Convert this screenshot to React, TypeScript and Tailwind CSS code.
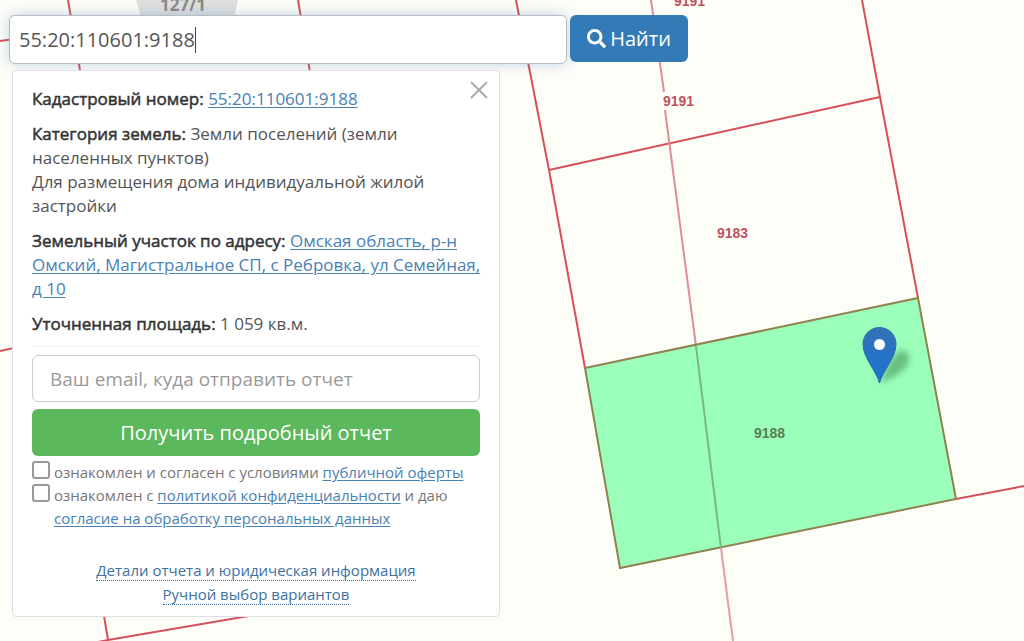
import { useState } from 'react'
import type { ReactNode } from 'react'
import { FaSearch } from 'react-icons/fa'

const CADASTRAL_NUMBER = '55:20:110601:9188'

const BORDERS = [
  'M68 0 L81 76 L104 616 L108 640',
  'M298 0 L310 72',
  'M0 41 L14 39',
  'M0 351 L14 348',
  'M516 0 L549 170 L585 368',
  'M549 170 L880 97',
  'M862 0 L880 97 L918 298',
  'M956 499 L1024 486',
  'M93 643 L108 640 L260 614',
]

function Label({ children }: { children: ReactNode }) {
  return <span className="text-[#333] [-webkit-text-stroke:0.5px_#333]">{children}</span>
}

function Link({ children }: { children: ReactNode }) {
  return (
    <a href="#" className="text-[#4a81b3] underline underline-offset-2">
      {children}
    </a>
  )
}

function ParcelMap() {
  return (
    <svg
      className="absolute inset-0 h-full w-full"
      viewBox="0 0 1024 641"
      preserveAspectRatio="xMinYMin slice"
      fontFamily="'Liberation Sans', sans-serif"
      fontWeight="bold"
    >
      <defs>
        <linearGradient id="pin" x1="0" y1="0" x2="0" y2="1">
          <stop offset="0" stopColor="#3273b5" />
          <stop offset="1" stopColor="#1b75d2" />
        </linearGradient>
        <filter id="soft" x="-50%" y="-50%" width="200%" height="200%">
          <feGaussianBlur stdDeviation="3" />
        </filter>
      </defs>

      <path d="M136 0 L238 0 L234 18 L141 18 Z" fill="#dfdfdd" />
      <text x="160" y="11" fontSize="17" fill="#8a8a8a" fontFamily="'Open Sans', sans-serif">127/1</text>

      <g fill="none" stroke="#d5505a" strokeWidth="2">
        {BORDERS.map(d => (
          <path key={d} d={d} />
        ))}
      </g>
      <path d="M651 0 L664 92 M665 110 L696 346" stroke="#e08d98" strokeWidth="2" fill="none" />
      <path d="M721 548 L733 641" stroke="#eb9aa6" strokeWidth="2" />

      <path d="M585 368 L918 298 L956 499 L620 568 Z" fill="#9bffbb" stroke="#8f8250" strokeWidth="2" />
      <path d="M696 346 L721 548" stroke="#7cb587" strokeWidth="2" />

      <g fontSize="14" fill="#c0525f">
        <text x="674" y="6">9191</text>
        <text x="663" y="106">9191</text>
        <text x="717" y="238">9183</text>
      </g>
      <text x="754" y="438" fontSize="14" fill="#558050">9188</text>

      <path
        d="M880 383 C886 368 892 356 900 350 C912 350 912 364 902 371 C896 376 888 380 880 383 Z"
        fill="#4d9b64"
        opacity="0.65"
        filter="url(#soft)"
      />
      <path
        d="M879.500 383 C876 370 863 358 863 344 A16.500 16.500 0 0 1 896 344 C896 358 883 370 879.500 383 Z"
        fill="url(#pin)"
        stroke="#2e6cab"
      />
      <circle cx="879.500" cy="344.500" r="5.500" fill="#fff" />
    </svg>
  )
}

function SearchBar() {
  const [query, setQuery] = useState(CADASTRAL_NUMBER)

  return (
    <form className="flex w-[679px] max-w-full items-start gap-[3px]" onSubmit={e => e.preventDefault()}>
      <div className="relative min-w-0 flex-1">
        <input
          type="text"
          aria-label="Кадастровый номер"
          value={query}
          onChange={e => setQuery(e.target.value)}
          className="block h-[49px] w-full rounded-md border border-[#b5bcc2] bg-white px-[9px] text-[20px] text-[#555] shadow-[0_0_14px_rgba(70,130,190,0.35)] outline-none"
        />
        <span className="absolute top-3 left-[186px] h-[26px] w-px bg-[#444]" />
      </div>
      <button
        type="submit"
        className="flex h-[47px] w-[118px] items-center justify-center gap-1 rounded-md bg-[#337ab7] text-[20px] text-white"
      >
        <FaSearch size={19} />
        Найти
      </button>
    </form>
  )
}

function ReportForm() {
  const [email, setEmail] = useState('')

  return (
    <form className="mt-[10px] border-t border-[#eee] pt-2" onSubmit={e => e.preventDefault()}>
      <input
        type="email"
        aria-label="Email"
        placeholder="Ваш email, куда отправить отчет"
        value={email}
        onChange={e => setEmail(e.target.value)}
        className="block h-[47px] w-full rounded-md border border-[#ccc] bg-white px-[17px] text-[19px] text-[#555] outline-none placeholder:text-[#999]"
      />
      <button type="submit" className="mt-[7px] block h-[47px] w-full rounded-md bg-[#5cb85c] text-[20px] text-white">
        Получить подробный отчет
      </button>

      <div className="mt-[5px] text-[15px] leading-[23px] text-[#777]">
        <div className="flex items-start gap-1">
          <input
            id="offer"
            type="checkbox"
            className="h-[18px] w-[18px] shrink-0 appearance-none rounded-[3px] border-2 border-[#999] bg-white checked:bg-[#337ab7]"
          />
          <label htmlFor="offer">
            ознакомлен и согласен с условиями <Link>публичной оферты</Link>
          </label>
        </div>
        <div className="flex items-start gap-1">
          <input
            id="privacy"
            type="checkbox"
            className="h-[18px] w-[18px] shrink-0 appearance-none rounded-[3px] border-2 border-[#999] bg-white checked:bg-[#337ab7]"
          />
          <label htmlFor="privacy">
            ознакомлен с <Link>политикой конфиденциальности</Link> и даю{' '}
            <Link>согласие на обработку персональных данных</Link>
          </label>
        </div>
      </div>
    </form>
  )
}

function ParcelPanel({ onClose }: { onClose: () => void }) {
  return (
    <section className="relative mt-[6px] ml-[3px] w-[488px] max-w-full rounded-[4px] border border-[#dcdfe4] bg-white px-[19px] pt-4 pb-[10px] text-[17px] leading-6 text-[#555]">
      <button
        type="button"
        aria-label="Закрыть"
        onClick={onClose}
        className="absolute top-[10px] right-[11px] text-[#aaa]"
      >
        <svg width="18" height="18" viewBox="0 0 18 18" stroke="currentColor" strokeWidth="2">
          <path d="M1 1 L17 17 M17 1 L1 17" />
        </svg>
      </button>

      <div className="space-y-[11px]">
        <p>
          <Label>Кадастровый номер:</Label> <Link>{CADASTRAL_NUMBER}</Link>
        </p>
        <p className="pr-8">
          <Label>Категория земель:</Label> Земли поселений (земли населенных пунктов)
          <br />
          Для размещения дома индивидуальной жилой застройки
        </p>
        <p className="-mr-3">
          <Label>Земельный участок по адресу:</Label>{' '}
          <Link>Омская область, р-н Омский, Магистральное СП, с Ребровка, ул Семейная, д&nbsp;10</Link>
        </p>
        <p>
          <Label>Уточненная площадь:</Label> 1 059 кв.м.
        </p>
      </div>

      <ReportForm />

      <div className="mt-7 flex flex-col items-center text-[15px] text-[#3c719f]">
        <button type="button" className="h-6">
          <span className="border-b border-dotted border-[#3c719f]">Детали отчета и юридическая информация</span>
        </button>
        <button type="button" className="h-6">
          <span className="border-b border-dotted border-[#3c719f]">Ручной выбор вариантов</span>
        </button>
      </div>
    </section>
  )
}

export default function App() {
  const [open, setOpen] = useState(true)

  return (
    <div className="relative min-h-screen overflow-hidden bg-[#fefef8] font-['Open_Sans',sans-serif]">
      <ParcelMap />
      <main className="relative px-[9px] pt-[15px] pb-6">
        <SearchBar />
        {open && <ParcelPanel onClose={() => setOpen(false)} />}
      </main>
    </div>
  )
}
